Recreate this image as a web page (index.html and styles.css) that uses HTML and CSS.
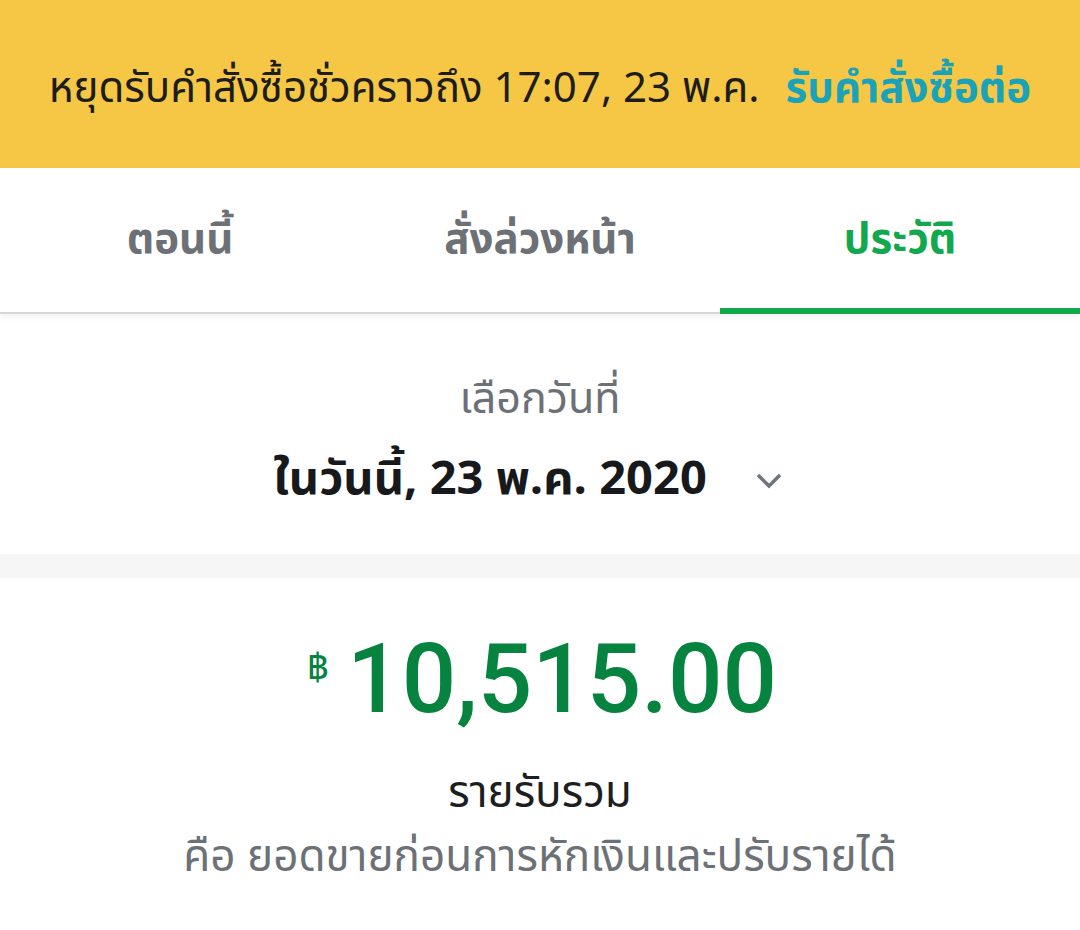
FILE: index.html
```html
<!DOCTYPE html>
<html lang="th">
<head>
    <meta charset="UTF-8">
    <meta name="viewport" content="width=device-width, initial-scale=1.0">
    <title>ประวัติ</title>
    <link rel="stylesheet" href="styles.css">
</head>
<body>

<!-- Paused banner -->
<div class="banner">
    <span class="banner-text">หยุดรับคำสั่งซื้อชั่วคราวถึง 17:07, 23 พ.ค.</span>
    <a class="banner-link" href="#">รับคำสั่งซื้อต่อ</a>
</div>

<!-- Tabs -->
<nav class="tabs">
    <div class="tab">ตอนนี้</div>
    <div class="tab">สั่งล่วงหน้า</div>
    <div class="tab active">ประวัติ</div>
</nav>

<!-- Date picker -->
<section class="date-picker">
    <div class="date-label">เลือกวันที่</div>
    <div class="date-value">
        <span>ในวันนี้, 23 พ.ค. 2020</span>
        <svg class="chevron" width="28" height="18" viewBox="0 0 28 18">
            <path d="M3 3 L14 14 L25 3" fill="none" stroke="#6f757b" stroke-width="3.5"/>
        </svg>
    </div>
</section>

<div class="divider"></div>

<!-- Total -->
<section class="summary">
    <div class="amount">
        <span class="currency">฿</span>
        <span class="value">10,515.00</span>
    </div>
    <div class="summary-title">รายรับรวม</div>
    <div class="summary-note">คือ ยอดขายก่อนการหักเงินและปรับรายได้</div>
</section>

</body>
</html>
```

FILE: styles.css
```css
body {
    margin: 0;
    padding: 0;
    background-color: #fff;
    font-family: 'Noto Sans Thai', 'Noto Sans', 'DejaVu Sans', sans-serif;
    color: #1c1e21;
}
.banner {
    height: 168px;
    background-color: #f5c744;
    display: flex;
    align-items: center;
    justify-content: center;
    gap: 26px;
    font-size: 42px;
    padding-top: 10px;
    box-sizing: border-box;
}
.banner-text {
    color: #1d1d1d;
}
.banner-link {
    color: #1aa3b8;
    font-weight: bold;
    text-decoration: none;
}
.tabs {
    display: flex;
    height: 144px;
    border-bottom: 2px solid #d6d6d6;
    box-shadow: 0 3px 6px rgba(0, 0, 0, 0.06);
}
.tab {
    flex: 1;
    display: flex;
    align-items: center;
    justify-content: center;
    font-size: 42px;
    font-weight: bold;
    color: #6b7177;
    border-bottom: 6px solid transparent;
    margin-bottom: -2px;
    padding-top: 4px;
}
.tab.active {
    color: #11a84e;
    border-bottom-color: #11a84e;
}
.date-picker {
    height: 240px;
    display: flex;
    flex-direction: column;
    align-items: center;
    padding-top: 53px;
    box-sizing: border-box;
}
.date-label {
    font-size: 43px;
    color: #6b7177;
}
.date-value {
    display: flex;
    align-items: center;
    gap: 48px;
    margin-right: 24px;
    margin-top: 12px;
    font-size: 47px;
    font-weight: bold;
    color: #17191c;
}
.chevron {
    margin-top: 2px;
}
.divider {
    height: 24px;
    background-color: #f6f6f6;
}
.summary {
    display: flex;
    flex-direction: column;
    align-items: center;
    padding-top: 44px;
}
.amount {
    display: flex;
    align-items: flex-start;
    gap: 18px;
    margin-left: 4px;
    color: #06843f;
}
.currency {
    font-size: 38px;
    margin-top: 18px;
}
.value {
    font-family: Roboto, sans-serif;
    font-size: 96px;
    font-weight: 500;
    line-height: 1.2;
}
.summary-title {
    font-size: 44px;
    color: #1c1e21;
    margin-top: 23px;
}
.summary-note {
    font-size: 44px;
    color: #6b7177;
    margin-top: -3px;
}
```
